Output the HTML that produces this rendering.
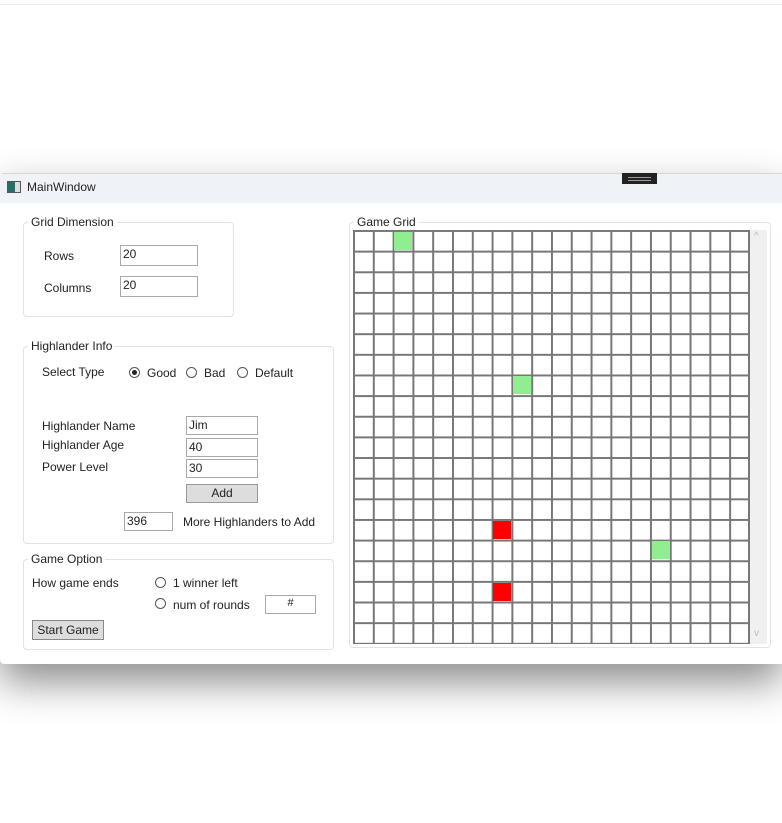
<!DOCTYPE html>
<html><head><style>
body{margin:0;width:782px;height:823px;background:#fff;position:relative;overflow:hidden;font-family:"Liberation Sans",sans-serif;font-size:12px;color:#222}
.a{position:absolute}
.win{left:0;top:173px;width:782px;height:490px;background:#fff;border-top:1px solid #d8d8d8;box-shadow:0 18px 40px rgba(0,0,0,.45);border-radius:4px 0 0 4px}
.tb{left:0;top:174px;width:782px;height:29px;background:#eff2f7}
.gb{border:1px solid #dde3ea;border-radius:4px}
.lg{background:#fff;padding:0 3px;font-size:12px}
.tx{border:1px solid #a9a9a9;background:#fff;height:19px;box-sizing:border-box;padding:1px 2px;font-size:12px}
.btn{border:1px solid #999;background:#dddddd;box-sizing:border-box;text-align:center}
.rd{width:11px;height:11px;border:1px solid #555;border-radius:50%;box-sizing:border-box}
.grid{left:353px;top:230px;width:397px;height:414px;background:linear-gradient(to right,#777 2px,transparent 2px) 0 0/19.8px 100%,linear-gradient(#777 2px,transparent 2px) 0 0/100% 20.65px;background-color:#fff;border-right:2px solid #777;border-bottom:1px solid #777;box-sizing:border-box}
.c{width:18px;height:18px}
</style></head><body>
<div class="a" style="left:0;top:0;width:782px;height:4px;border-bottom:1px solid #eee"></div>
<div class="a win"></div>
<div class="a tb"></div>
<div class="a" style="left:7px;top:181px;width:12px;height:10px;border:1px solid #555;background:linear-gradient(90deg,#2a6e6a 60%,#ddd 60%)"></div>
<div class="a" style="left:27px;top:180px;font-size:12px">MainWindow</div>
<div class="a" style="left:622px;top:173px;width:35px;height:11px;background:#222"></div>
<div class="a" style="left:628px;top:177px;width:23px;height:1px;background:#999"></div>
<div class="a" style="left:628px;top:180px;width:23px;height:1px;background:#999"></div>

<div class="a gb" style="left:23px;top:222px;width:209px;height:93px"></div>
<div class="a lg" style="left:28px;top:215px">Grid Dimension</div>
<div class="a" style="left:44px;top:249px">Rows</div>
<div class="a tx" style="left:120px;top:245px;width:78px;height:21px">20</div>
<div class="a" style="left:44px;top:281px">Columns</div>
<div class="a tx" style="left:120px;top:276px;width:78px;height:21px">20</div>

<div class="a gb" style="left:23px;top:346px;width:309px;height:196px"></div>
<div class="a lg" style="left:28px;top:339px">Highlander Info</div>
<div class="a" style="left:42px;top:365px">Select Type</div>
<div class="a rd" style="left:129px;top:367px"></div><div class="a" style="left:132px;top:370px;width:5px;height:5px;border-radius:50%;background:#222"></div>
<div class="a" style="left:147px;top:366px">Good</div>
<div class="a rd" style="left:186px;top:367px"></div><div class="a" style="left:204px;top:366px">Bad</div>
<div class="a rd" style="left:237px;top:367px"></div><div class="a" style="left:255px;top:366px">Default</div>
<div class="a" style="left:42px;top:419px">Highlander Name</div>
<div class="a tx" style="left:186px;top:416px;width:72px">Jim</div>
<div class="a" style="left:42px;top:438px">Highlander Age</div>
<div class="a tx" style="left:186px;top:438px;width:72px">40</div>
<div class="a" style="left:42px;top:460px">Power Level</div>
<div class="a tx" style="left:186px;top:459px;width:72px">30</div>
<div class="a btn" style="left:186px;top:484px;width:72px;height:19px;line-height:17px">Add</div>
<div class="a tx" style="left:124px;top:512px;width:49px">396</div>
<div class="a" style="left:183px;top:515px">More Highlanders to Add</div>

<div class="a gb" style="left:23px;top:559px;width:309px;height:89px"></div>
<div class="a lg" style="left:28px;top:552px">Game Option</div>
<div class="a" style="left:32px;top:576px">How game ends</div>
<div class="a rd" style="left:155px;top:577px"></div><div class="a" style="left:173px;top:576px">1 winner left</div>
<div class="a rd" style="left:155px;top:598px"></div><div class="a" style="left:173px;top:598px">num of rounds</div>
<div class="a tx" style="left:265px;top:595px;width:51px;text-align:center;font-size:11px">#</div>
<div class="a btn" style="left:32px;top:620px;width:72px;height:20px;line-height:18px;background:#ddd;border-color:#888">Start Game</div>

<div class="a gb" style="left:349px;top:222px;width:420px;height:424px"></div>
<div class="a lg" style="left:354px;top:215px">Game Grid</div>
<div class="a" style="left:750px;top:230px;width:17px;height:414px;background:#f0f0f0"></div>
<div class="a" style="left:754px;top:231px;color:#bbb;font-size:10px">^</div>
<div class="a" style="left:754px;top:628px;color:#bbb;font-size:10px">v</div>
<div class="a grid"></div>
<div class="a c" style="left:394px;top:232px;background:#90ee90"></div>
<div class="a c" style="left:513px;top:376px;background:#90ee90"></div>
<div class="a c" style="left:493px;top:521px;background:#f00"></div>
<div class="a c" style="left:652px;top:541px;background:#90ee90"></div>
<div class="a c" style="left:493px;top:583px;background:#f00"></div>
</body></html>
